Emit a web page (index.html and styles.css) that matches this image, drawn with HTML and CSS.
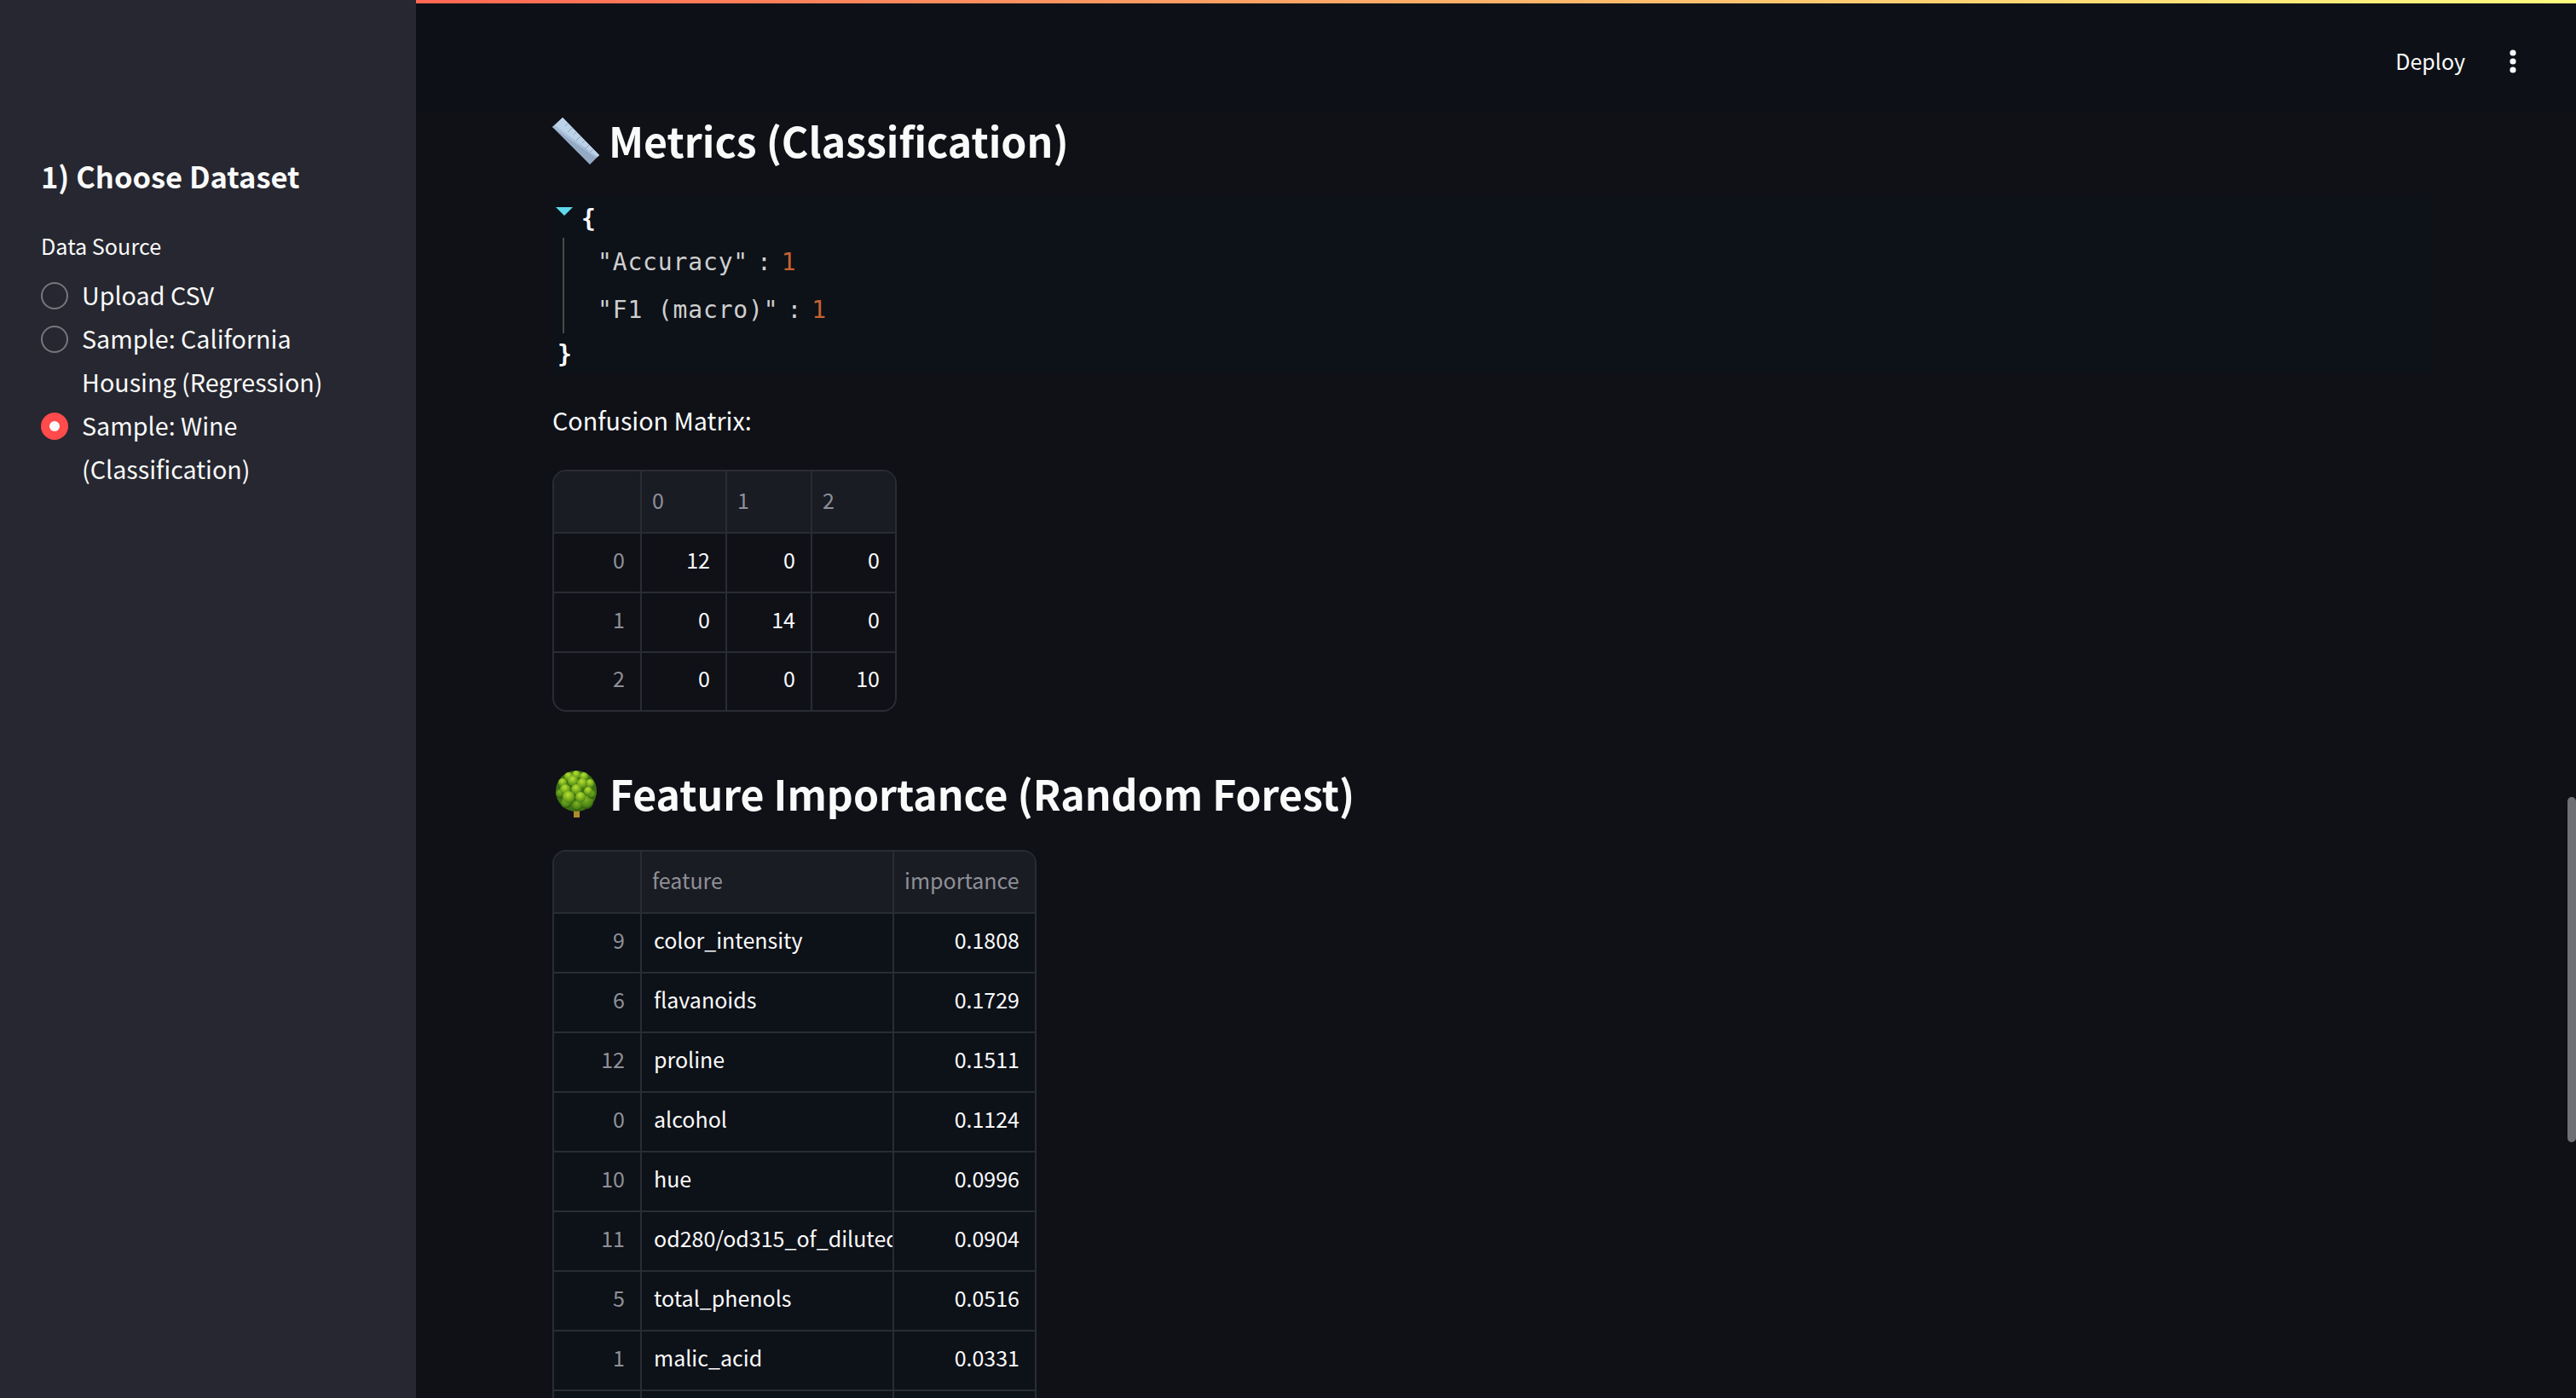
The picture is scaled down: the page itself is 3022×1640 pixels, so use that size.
FILE: index.html
```html
<!DOCTYPE html>
<html>
	<head>
		<meta charset="utf-8">
		<title>Dataset Explorer</title>
		<link rel="stylesheet" href="styles.css">
	</head>
	<body>
		<div class="app">
			<aside class="sidebar">
				<h2 class="side-title">1) Choose Dataset</h2>
				<div class="field-label">Data Source</div>
				<ul class="radios">
					<li class="radio"><span class="dot"></span><span class="radio-text">Upload CSV</span></li>
					<li class="radio"><span class="dot"></span><span class="radio-text">Sample: California Housing (Regression)</span></li>
					<li class="radio checked"><span class="dot"></span><span class="radio-text">Sample: Wine (Classification)</span></li>
				</ul>
			</aside>

			<main class="main">
				<div class="top-bar"></div>
				<div class="toolbar">
					<span class="deploy">Deploy</span>
					<svg class="menu-dots" width="10" height="30" viewBox="0 0 10 30">
						<circle cx="5" cy="5" r="3.6"/>
						<circle cx="5" cy="15" r="3.6"/>
						<circle cx="5" cy="25" r="3.6"/>
					</svg>
				</div>

				<div class="content">
					<h3 class="heading">
						<svg class="emoji" width="56" height="56" viewBox="0 0 56 56">
							<polygon points="0,11 12,0 55,44 44,55" fill="#94a9c4"/>
							<polygon points="0,11 12,0 55,44 51,47" fill="#a9bfd8"/>
							<polygon points="3,9 12,0 55,44 53,46" fill="#bcd2e8"/>
							<g stroke="#8ea3bd" stroke-width="1">
								<line x1="18" y1="7" x2="15" y2="10"/>
								<line x1="23" y1="12" x2="18" y2="17"/>
								<line x1="28" y1="17" x2="25" y2="20"/>
								<line x1="33" y1="22" x2="28" y2="27"/>
								<line x1="38" y1="27" x2="35" y2="30"/>
								<line x1="43" y1="32" x2="38" y2="37"/>
								<line x1="48" y1="37" x2="45" y2="40"/>
							</g>
						</svg>
						<span class="heading-text">Metrics (Classification)</span>
					</h3>

					<div class="json">
						<div class="json-open"><span class="caret"></span><span class="brace">{</span></div>
						<div class="json-body">
							<div class="json-row"><span class="json-key">"Accuracy"</span><span class="json-colon">:</span><span class="json-num">1</span></div>
							<div class="json-row"><span class="json-key">"F1 (macro)"</span><span class="json-colon">:</span><span class="json-num">1</span></div>
						</div>
						<div class="json-close"><span class="brace">}</span></div>
					</div>

					<p class="caption">Confusion Matrix:</p>

					<div class="grid-wrap matrix">
						<table class="grid">
							<colgroup>
								<col class="col-index"><col class="col-num"><col class="col-num"><col class="col-last">
							</colgroup>
							<tr class="head"><th></th><th>0</th><th>1</th><th>2</th></tr>
							<tr><td class="idx">0</td><td>12</td><td>0</td><td>0</td></tr>
							<tr><td class="idx">1</td><td>0</td><td>14</td><td>0</td></tr>
							<tr><td class="idx">2</td><td>0</td><td>0</td><td>10</td></tr>
						</table>
					</div>

					<h3 class="heading second">
						<svg class="emoji tree" width="48" height="56" viewBox="0 0 48 56">
							<defs>
								<radialGradient id="leaf" cx="45%" cy="30%" r="70%">
									<stop offset="0" stop-color="#b9e036"/>
									<stop offset="0.6" stop-color="#76ac1c"/>
									<stop offset="1" stop-color="#4a8015"/>
								</radialGradient>
								<radialGradient id="leaf-dark" cx="45%" cy="30%" r="70%">
									<stop offset="0" stop-color="#7fb321"/>
									<stop offset="0.7" stop-color="#4c8416"/>
									<stop offset="1" stop-color="#2a520d"/>
								</radialGradient>
							</defs>
							<rect x="21" y="44" width="7" height="11" fill="#b08a2c"/>
							<circle cx="24" cy="24" r="24" fill="#3f7212"/>
							<g fill="url(#leaf-dark)">
								<circle cx="36" cy="37" r="8"/>
								<circle cx="25" cy="41" r="6"/>
								<circle cx="12" cy="38" r="6"/>
								<circle cx="42" cy="28" r="5"/>
								<circle cx="5" cy="27" r="5"/>
							</g>
							<g fill="url(#leaf)">
								<circle cx="24" cy="5" r="5"/>
								<circle cx="15" cy="7" r="5"/>
								<circle cx="33" cy="7" r="5"/>
								<circle cx="8" cy="14" r="5"/>
								<circle cx="40" cy="15" r="5"/>
								<circle cx="20" cy="12" r="6"/>
								<circle cx="31" cy="15" r="6"/>
								<circle cx="11" cy="22" r="6"/>
								<circle cx="38" cy="24" r="5"/>
								<circle cx="24" cy="22" r="6"/>
								<circle cx="15" cy="31" r="7"/>
								<circle cx="29" cy="31" r="6"/>
							</g>
						</svg>
						<span class="heading-text">Feature Importance (Random Forest)</span>
					</h3>

					<div class="grid-wrap features">
						<table class="grid">
							<colgroup>
								<col class="col-index"><col class="col-name"><col class="col-score">
							</colgroup>
							<tr class="head"><th></th><th>feature</th><th>importance</th></tr>
							<tr><td class="idx">9</td><td class="name">color_intensity</td><td>0.1808</td></tr>
							<tr><td class="idx">6</td><td class="name">flavanoids</td><td>0.1729</td></tr>
							<tr><td class="idx">12</td><td class="name">proline</td><td>0.1511</td></tr>
							<tr><td class="idx">0</td><td class="name">alcohol</td><td>0.1124</td></tr>
							<tr><td class="idx">10</td><td class="name">hue</td><td>0.0996</td></tr>
							<tr><td class="idx">11</td><td class="name">od280/od315_of_diluted_wines</td><td>0.0904</td></tr>
							<tr><td class="idx">5</td><td class="name">total_phenols</td><td>0.0516</td></tr>
							<tr><td class="idx">1</td><td class="name">malic_acid</td><td>0.0331</td></tr>
							<tr><td class="idx"></td><td class="name"></td><td></td></tr>
						</table>
					</div>
				</div>

				<div class="scroll-thumb"></div>
			</main>
		</div>
	</body>
</html>
```

FILE: styles.css
```css
* {
	margin: 0;
	padding: 0;
	box-sizing: border-box;
}

html, body {
	height: 100%;
	overflow: hidden;
}

body {
	background: #0f1117;
	color: #fafafa;
	font-family: "Noto Sans CJK SC", "Noto Sans", sans-serif;
	font-size: 28.7px;
}

.app {
	display: flex;
	height: 1640px;
}

/* sidebar */
.sidebar {
	width: 488px;
	flex: none;
	background: #262730;
	padding: 176px 48px 0;
}

.side-title {
	font-size: 34.5px;
	line-height: 60px;
	font-weight: 600;
}

.field-label {
	font-size: 25.2px;
	line-height: 40px;
	margin-top: 32px;
}

.radios {
	list-style: none;
	margin-top: 12px;
}

.radio {
	display: flex;
	gap: 16px;
	line-height: 51px;
}

.dot {
	width: 32px;
	height: 32px;
	flex: none;
	margin-top: 11px;
	border: 2px solid #76777e;
	border-radius: 50%;
}

.checked .dot {
	background: #ff4b4b;
	border-color: #ff4b4b;
	display: flex;
	align-items: center;
	justify-content: center;
}

.checked .dot::after {
	content: "";
	width: 12px;
	height: 12px;
	border-radius: 50%;
	background: #fafafa;
}

/* main column */
.main {
	flex: 1;
	position: relative;
	overflow: hidden;
}

/* the gradient starts under the sidebar, at the window's left edge */
.top-bar {
	height: 4px;
	background: linear-gradient(90deg, #ff4b4b, #fffd80) right / 3022px 100%;
}

.toolbar {
	height: 126px;
	display: flex;
	justify-content: flex-end;
	padding: 47px 69px 0 0;
	background: #0d1117;
}

.deploy {
	font-size: 25px;
	line-height: 40px;
	margin-right: 51px;
}

.menu-dots {
	fill: #fafafa;
	margin-top: 6px;
}

.content {
	padding: 0 172px 0 160px;
}

.heading {
	display: flex;
	align-items: center;
	height: 72px;
	font-size: 48.2px;
	line-height: 64px;
	font-weight: 600;
}

.heading-text {
	margin-bottom: 5px;
}

.heading .emoji {
	flex: none;
	margin-right: 10px;
}

.heading .tree {
	margin: 0 15px 0 4px;
}

.heading.second {
	margin-top: 61px;
}

/* json block */
.json {
	margin-top: 31px;
	background: #0d1118;
	font-family: "DejaVu Sans Mono", "Liberation Mono", monospace;
	font-size: 28px;
	height: 206px;
}

.json-open {
	display: flex;
	height: 46px;
	align-items: center;
	padding-left: 34px;
	position: relative;
}

.caret {
	position: absolute;
	left: 4px;
	top: 10px;
	border-left: 10px solid transparent;
	border-right: 10px solid transparent;
	border-top: 10px solid #5fd9ee;
}

.brace {
	color: #fafafa;
	font-weight: 700;
}

.json-body {
	margin-left: 12px;
	border-left: 2px solid #4a4a4a;
	padding-left: 39px;
}

.json-row {
	display: flex;
	align-items: center;
	height: 56px;
	color: #cfcfcf;
	letter-spacing: 0.85px;
}

.json-colon {
	margin: 0 11px 0 10px;
}

.json-num {
	color: #c8622e;
}

.json-close {
	height: 48px;
	display: flex;
	align-items: center;
	padding-left: 6px;
}

.caption {
	line-height: 48px;
	margin-top: 30px;
	margin-bottom: 2px;
}

/* data tables */
.grid-wrap {
	border: 2px solid #2a2c34;
	border-radius: 16px;
	overflow: hidden;
}

.matrix {
	width: 404px;
	margin-top: 34px;
}

.features {
	width: 568px;
	margin-top: 29px;
	background: #0d1118;
}

.grid {
	border-collapse: collapse;
	table-layout: fixed;
	width: 100%;
	font-size: 25px;
}

.col-index {
	width: 102px;
}

.col-num {
	width: 100px;
}

.col-name {
	width: 296px;
}

.grid tr {
	height: 70px;
}

.grid .head {
	height: 72px;
	background: #1a1c24;
}

.grid th, .grid td {
	padding: 0 18px 6px 14px;
	border-right: 2px solid #2a2c34;
	border-bottom: 2px solid #2a2c34;
	white-space: nowrap;
	overflow: hidden;
}

.grid td {
	padding-bottom: 9px;
}

.grid th:last-child, .grid td:last-child {
	border-right: none;
}

.grid tr:last-child td {
	border-bottom: none;
}

.matrix tr:last-child {
	height: 68px;
}

.grid th {
	text-align: left;
	font-weight: 400;
	color: #8f9096;
	padding-left: 12px;
}

.grid td {
	text-align: right;
}

.grid .idx {
	color: #8f9096;
}

.grid .name {
	text-align: left;
	padding-right: 0;
}

.scroll-thumb {
	position: absolute;
	right: 0;
	top: 935px;
	width: 10px;
	height: 405px;
	border-radius: 5px;
	background: #6f7074;
}
```
